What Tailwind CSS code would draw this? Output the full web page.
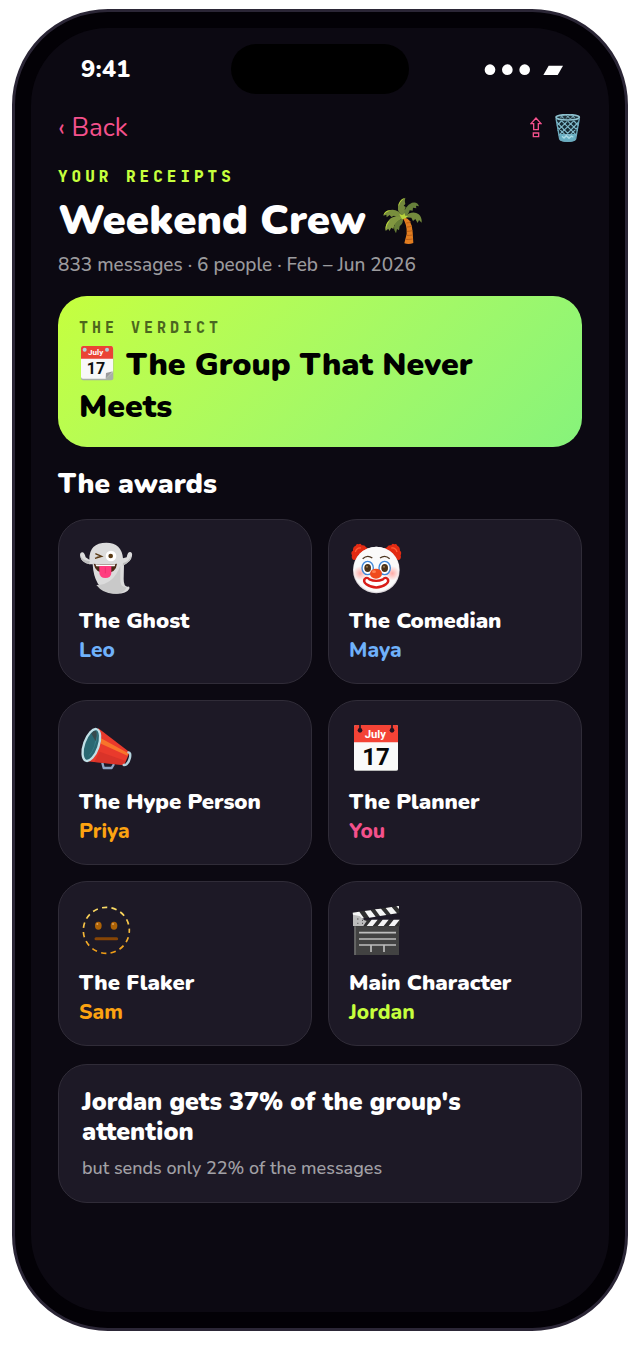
<!DOCTYPE html>
<html lang="en">

<head>
    <meta charset="utf-8">
    <meta name="viewport" content="width=device-width, initial-scale=1">
    <title>Weekend Crew</title>
    <script src="https://cdn.jsdelivr.net/npm/@tailwindcss/browser@4"></script>
</head>

<body class="bg-white font-[Nunito,Lato,sans-serif] text-white">
    <div class="mx-3 mt-[9px] rounded-[96px] border-3 border-[#2b2636] bg-[#030106] p-4">
        <div class="rounded-[77px] bg-[#0c0912] pt-4 pb-[109px]">

            <!-- status bar -->
            <div class="grid grid-cols-[1fr_auto_1fr] items-center px-[45px]">
                <span class="pl-[5px] text-2xl font-extrabold">9:41</span>
                <div class="h-[50px] w-[178px] rounded-full bg-black"></div>
                <svg class="w-20 justify-self-end" viewBox="0 0 240 36" fill="#fff">
                    <circle cx="18" cy="20" r="16" />
                    <circle cx="70" cy="20" r="16" />
                    <circle cx="122" cy="20" r="16" />
                    <path d="M194 8h43l-17 30h-43z" />
                </svg>
            </div>

            <main class="px-[27px]">
                <nav class="mt-4 flex items-center justify-between text-[#f4518c]">
                    <a href="#" class="text-[26px] leading-9">‹ Back</a>
                    <div class="flex items-center gap-3">
                        <button aria-label="Share">
                            <svg class="h-7 w-3" viewBox="628 338 36 84" fill="none" stroke="currentColor" stroke-width="4">
                                <path d="M646 350l-15 17h8v18h14v-18h8zM638 395h16v11h-16z" />
                            </svg>
                        </button>
                        <button aria-label="Delete">
                            <svg class="h-7 w-7" viewBox="700 340 84 84" fill="none">
                                <path d="M706 352l11 64q1 7 24 7t24-7l11-64z" fill="#172b34" />
                                <path d="M715 400h52l-3 17q-3 6-23 6t-23-6z" fill="#66aec2" />
                                <path d="M708 364l42 43M711 380l30 30M722 360l46 44M742 362l29 28M760 361l13 14M774 364l-42 43M771 380l-30 30M760 360l-46 44M740 362l-29 28M722 361l-13 14" stroke="#80b8c9" stroke-width="3.5" />
                                <path d="M706 353l11 62q3 7 24 7t24-7l11-62" stroke="#6daabd" stroke-width="4" />
                                <ellipse cx="741" cy="350" rx="35" ry="8" fill="#20323a" stroke="#8fc3d1" stroke-width="5" />
                                <path d="M719 346l12 8m4-11l15 12m-1-12l14 9m-32-9l-12 8m30-9l-14 12m27-9l-13 9" stroke="#78a9b8" stroke-width="3" />
                                <path d="M724 407l6 5 7-7 8 8 8-7 5 4" stroke="#aadce7" stroke-width="4" />
                            </svg>
                        </button>
                    </div>
                </nav>

                <p class="mt-[21px] font-['JetBrains_Mono','DejaVu_Sans_Mono',monospace] text-base leading-5 font-extrabold tracking-[4px] text-[#c6ff3d]">YOUR RECEIPTS</p>
                <h1 class="mt-2 flex items-center gap-4 text-[42px] leading-[52px] font-black">
                    Weekend Crew
                    <svg class="h-12 w-[42px]" viewBox="185 588 126 144">
                        <path d="M247 651q12-3 21 8 8 14 9 34l2 33q-13 5-27 1l7-28q2-28-12-48z" fill="#e27d20" />
                        <path d="M258 666q7 0 13-4M260 678q8 0 14-3M260 691q9 0 16-2M258 703q9 1 18-1M255 715q10 1 22-1" stroke="#b95d17" stroke-width="3" fill="none" />
                        <path d="M250 645q-20-10-17-27 2-22 22-28-3 9 0 19l-5 5 6 4-3 8 6 2z" fill="#73883c" />
                        <path d="M248 648q5-35 27-43 17-4 21 11l-9-2 1 8-10-2-1 9-9-1q-2 14-20 20z" fill="#67803b" />
                        <path d="M250 648q27-22 45-8 10 8 9 25l-8-8-4 9-7-12-7 6-5-10q-11 0-23-2z" fill="#758b3d" />
                        <path d="M249 648q-17-26-39-21-17 3-21 17l9-3 1 8 9-7 5 6 8-4q12 9 28 4z" fill="#788e3d" />
                        <path d="M249 650q-31-10-43 7-13 14-10 33l8-7 3 7 6-10 6 4 3-11q11-15 27-23z" fill="#819740" />
                        <path d="M248 651q-25 12-27 26-1 10 6 20l3-13 6 4 2-12q12-10 10-25z" fill="#667e37" />
                        <path d="M189 643q5-16 22-15-14 4-22 15zM196 688q-3-20 13-31-10 14-13 31zM234 617q1-20 18-26-12 9-18 26zM237 640l11 2 4-6 3 8 8 1-7 7-11 3z" fill="#b9d43c" />
                    </svg>
                </h1>
                <p class="mt-1 text-[19px] leading-7 font-medium text-white/60">833 messages · 6 people · Feb – Jun 2026</p>

                <section class="mt-[17px] rounded-[29px] bg-linear-135 from-[#c6ff3d] to-[#86f37b] px-[21px] pt-[22px] pb-[19px] text-black">
                    <p class="font-['JetBrains_Mono','DejaVu_Sans_Mono',monospace] text-[15px] leading-5 font-extrabold tracking-[4px] text-black/60">THE VERDICT</p>
                    <h2 class="mt-1.5 text-[32px] leading-[42px] font-black">
                        <svg class="mr-0.5 inline h-9 w-9 align-[-6px]" viewBox="120 183 108 108">
                            <rect x="126" y="190" width="97" height="99" rx="6" fill="#a9b0a8" />
                            <path d="M126 192q0-6 6-6h85q5 0 5 6v71l-22 21h-68q-6 0-6-6z" fill="#f8f8f8" />
                            <path d="M126 192q0-6 6-6h85q5 0 5 6v32h-96z" fill="#ea4335" />
                            <path d="M200 284l1-17q8-1 21-5z" fill="#9b9b9b" />
                            <circle cx="137" cy="197" r="6" fill="#b5d2d8" />
                            <circle cx="204" cy="197" r="6" fill="#b5d2d8" />
                            <text x="170" y="213" text-anchor="middle" class="font-[Roboto,sans-serif] text-[24px] font-bold" fill="#fff">July</text>
                            <text x="171" y="269" text-anchor="middle" class="font-[Roboto,sans-serif] text-[48px] font-bold" fill="#111">17</text>
                        </svg>
                        The Group That Never Meets
                    </h2>
                </section>

                <h2 class="mt-[17px] text-[28px] leading-10 font-black">The awards</h2>

                <div class="mt-[15px] grid grid-cols-2 gap-4">
                    <article class="rounded-[29px] border border-[#302c38] bg-[#1d1926] px-5 pt-5 pb-[18px]">
                        <svg class="h-14 w-14" viewBox="87 90 168 168">
                            <path d="M118 163q-25-5-28-27 0-9 7-9 6 0 10 15l11 7q-1-51 51-51 46 1 50 47l11-3q3-16 10-16 8 1 6 12-3 18-24 26l-1 43q0 22 11 23 8-3 6 6-8 15-38 15-40 1-57-31-13-22-15-57z" fill="#dcdcdc" />
                            <path d="M139 225q50 0 72-58v40q0 22 11 23 8-3 6 6-8 15-38 15-31 0-51-26z" fill="#c9c9c9" />
                            <path d="M118 163q-25-5-28-27 10 18 29 17zM219 159q17-3 24-22 0 19-25 30z" fill="#bdbdbd" />
                            <circle cx="183" cy="138" r="16" fill="#fff" />
                            <circle cx="182" cy="138" r="7" fill="#5a3a14" />
                            <path d="M136 131l19 8-20 6m5-3l16-3" stroke="#5a3a14" stroke-width="4" fill="none" />
                            <path d="M131 161q34 5 70 0-3 28-34 28t-36-28z" fill="#4b2a16" />
                            <path d="M136 163q31 3 60 0l-2 6h-55z" fill="#fff" />
                            <path d="M148 168h36v21q-1 15-18 15-16 0-18-15z" fill="#ff3d7f" />
                            <path d="M166 172v18" stroke="#f0306f" stroke-width="3" />
                        </svg>
                        <h3 class="mt-[11px] text-[22px] leading-7 font-black">The Ghost</h3>
                        <p class="text-[21px] leading-[30px] font-extrabold text-[#6fb1fb]">Leo</p>
                    </article>

                    <article class="rounded-[29px] border border-[#302c38] bg-[#1d1926] px-5 pt-5 pb-[18px]">
                        <svg class="h-14 w-14" viewBox="87 90 168 168">
                            <defs>
                                <radialGradient id="blush">
                                    <stop stop-color="#ffaaa6" />
                                    <stop offset="1" stop-color="#ffaaa6" stop-opacity="0" />
                                </radialGradient>
                            </defs>
                            <path d="M101 150q-8-4-5-14-5-10 3-14-1-12 8-15 2-7 9-4 6-4 9 3 10-2 13 6 13 5 9 15l-20 20zM237 150q8-4 5-14 4-10-2-14 0-12-8-15-2-7-9-4-6-4-9 3-10-2-13 6-13 5-9 15l20 20z" fill="#e32b13" />
                            <path d="M106 126q4-14 17-12M231 126q-4-14-17-12" stroke="#ff5c35" stroke-width="4" fill="none" />
                            <circle cx="169" cy="180" r="70" fill="#ddd8dc" />
                            <circle cx="169" cy="178" r="68" fill="#fafafa" />
                            <circle cx="121" cy="190" r="22" fill="url(#blush)" />
                            <circle cx="217" cy="190" r="22" fill="url(#blush)" />
                            <path d="M128 146q14-13 29-2M180 144q15-11 29 2" stroke="#4c3620" stroke-width="4" fill="none" />
                            <ellipse cx="143" cy="174" rx="17" ry="20" fill="#fff" stroke="#3f86d8" stroke-width="4" />
                            <ellipse cx="194" cy="174" rx="17" ry="20" fill="#fff" stroke="#3f86d8" stroke-width="4" />
                            <ellipse cx="143" cy="174" rx="10" ry="12" fill="#4c3218" />
                            <ellipse cx="194" cy="174" rx="10" ry="12" fill="#4c3218" />
                            <circle cx="141" cy="170" r="3" fill="#967b55" />
                            <circle cx="192" cy="170" r="3" fill="#967b55" />
                            <path d="M134 207q7-7 14 1 21 9 41 0 7-8 14-1 5 7-4 15-30 21-61 0-9-8-4-15z" fill="#fff" stroke="#d91d18" stroke-width="7" />
                            <ellipse cx="168" cy="191" rx="18" ry="15" fill="#f04a1c" />
                            <ellipse cx="162" cy="185" rx="6" ry="4" fill="#ff8052" />
                        </svg>
                        <h3 class="mt-[11px] text-[22px] leading-7 font-black">The Comedian</h3>
                        <p class="text-[21px] leading-[30px] font-extrabold text-[#6fb1fb]">Maya</p>
                    </article>

                    <article class="rounded-[29px] border border-[#302c38] bg-[#1d1926] px-5 pt-5 pb-[18px]">
                        <svg class="h-14 w-14" viewBox="87 93 168 168">
                            <path d="M157 218l4 16h24l7-12" stroke="#8fa5c4" stroke-width="7" fill="none" stroke-linejoin="round" />
                            <path d="M145 115l94 72-17 39-117-13z" fill="#e93a2c" />
                            <path d="M153 145l82 45-3 7-79-36z" fill="#f8742b" />
                            <path d="M149 185l78 28-5 12-89-9z" fill="#c92b26" opacity=".5" />
                            <path d="M235 187q8 0 5 16-6 23-19 22" stroke="#b3d2dc" stroke-width="7" fill="none" stroke-linecap="round" />
                            <ellipse cx="124" cy="165" rx="22" ry="50" transform="rotate(19 124 165)" fill="#2a6973" stroke="#c1e0e7" stroke-width="7" />
                            <path d="M138 121q10 13-3 45-9 27-22 35 27-28 25-80z" fill="#439099" opacity=".6" />
                            <path d="M124 131q10-14 16-5 2 13-3 28-8-15-13-23z" fill="#374a4d" />
                        </svg>
                        <h3 class="mt-[11px] text-[22px] leading-7 font-black">The Hype Person</h3>
                        <p class="text-[21px] leading-[30px] font-extrabold text-[#fca311]">Priya</p>
                    </article>

                    <article class="rounded-[29px] border border-[#302c38] bg-[#1d1926] px-5 pt-5 pb-[18px]">
                        <svg class="h-14 w-14" viewBox="87 93 168 168">
                            <rect x="102" y="108" width="132" height="135" rx="5" fill="#b7b7b7" />
                            <path d="M102 110q0-5 5-5h122q5 0 5 5v126q0 4-5 4H107q-5 0-5-4z" fill="#fafafa" />
                            <path d="M102 110q0-5 5-5h122q5 0 5 5v47H102z" fill="#f44336" />
                            <path d="M120 104v15M216 104v15" stroke="#1d1926" stroke-width="5" />
                            <circle cx="120" cy="121" r="7" fill="#251420" />
                            <circle cx="216" cy="121" r="7" fill="#251420" />
                            <text x="166" y="143" text-anchor="middle" class="font-[Roboto,sans-serif] text-[34px] font-bold" fill="#fff">July</text>
                            <text x="168" y="225" text-anchor="middle" class="font-[Roboto,sans-serif] text-[72px] font-bold" fill="#080808">17</text>
                        </svg>
                        <h3 class="mt-[11px] text-[22px] leading-7 font-black">The Planner</h3>
                        <p class="text-[21px] leading-[30px] font-extrabold text-[#f4518c]">You</p>
                    </article>

                    <article class="rounded-[29px] border border-[#302c38] bg-[#1d1926] px-5 pt-5 pb-[18px]">
                        <svg class="h-14 w-14" viewBox="87 96 168 168">
                            <defs>
                                <linearGradient id="ring" x2="0" y2="1">
                                    <stop stop-color="#fbdc67" />
                                    <stop offset="1" stop-color="#ef9b14" />
                                </linearGradient>
                            </defs>
                            <circle cx="169" cy="181" r="69" fill="none" stroke="url(#ring)" stroke-width="5" stroke-dasharray="16 12.9" stroke-dashoffset="8" />
                            <ellipse cx="145" cy="167" rx="10" ry="12" fill="#ad6206" />
                            <ellipse cx="192" cy="167" rx="10" ry="12" fill="#ad6206" />
                            <circle cx="142" cy="162" r="3" fill="#dda15b" />
                            <circle cx="189" cy="162" r="3" fill="#dda15b" />
                            <path d="M138 206h62" stroke="#874506" stroke-width="9" stroke-linecap="round" />
                        </svg>
                        <h3 class="mt-[11px] text-[22px] leading-7 font-black">The Flaker</h3>
                        <p class="text-[21px] leading-[30px] font-extrabold text-[#fca311]">Sam</p>
                    </article>

                    <article class="rounded-[29px] border border-[#302c38] bg-[#1d1926] px-5 pt-5 pb-[18px]">
                        <svg class="h-14 w-14" viewBox="87 96 168 168">
                            <path d="M103 168h134v87H103z" fill="#424242" />
                            <path d="M103 168h4v87h-4z" fill="#777" />
                            <path d="M99 127l137-19 2 21-137 20z" fill="#303030" />
                            <path d="M99 149h141v20H99z" fill="#303030" />
                            <path d="M134 123l18-2 15 19-19 3zM165 118l18-2 16 19-19 3zM197 114l18-3 16 19-19 3zM229 109l8-1v9zM98 128l20-3 14 20-31 5z" fill="#f5f5f5" />
                            <path d="M155 149h18l-15 19h-18zM188 149h18l-15 19h-18zM221 149h18l-15 19h-18z" fill="#f5f5f5" />
                            <path d="M99 134l20 4 14 13 7 2-10 15H99z" fill="#bcbcbc" />
                            <path d="M112 147h3M112 160h3M126 160h3M126 151h3" stroke="#555" stroke-width="4" />
                            <path d="M117 188h111M117 207h111M117 225h111M153 225v21M192 225v21" stroke="#bdbdbd" stroke-width="5" />
                        </svg>
                        <h3 class="mt-[11px] text-[22px] leading-7 font-black">Main Character</h3>
                        <p class="text-[21px] leading-[30px] font-extrabold text-[#c6ff3d]">Jordan</p>
                    </article>
                </div>

                <section class="mt-[18px] rounded-[29px] border border-[#302c38] bg-[#1d1926] px-[23px] pt-[22px] pb-5">
                    <h2 class="text-[25px] leading-[30px] font-black">Jordan gets 37% of the group's attention</h2>
                    <p class="mt-[7px] text-[18px] leading-7 font-medium text-white/60">but sends only 22% of the messages</p>
                </section>
            </main>
        </div>
    </div>
</body>

</html>
